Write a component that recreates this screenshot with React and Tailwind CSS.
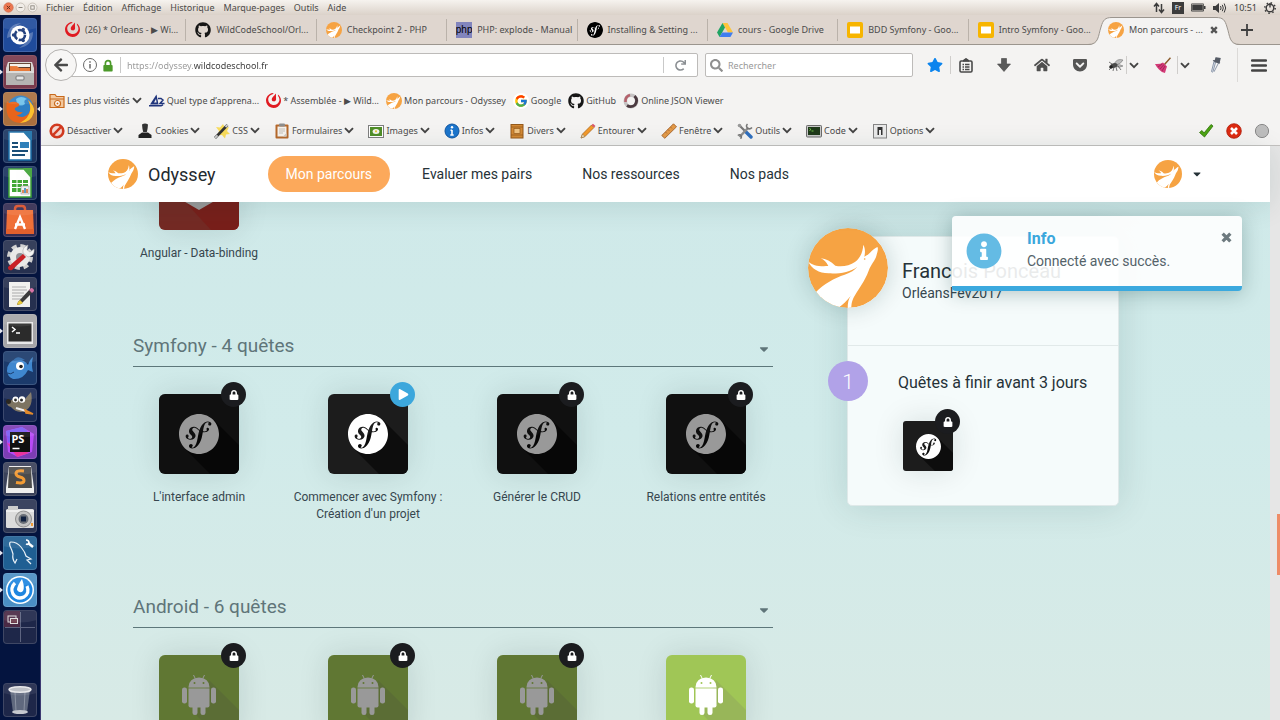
import React from "react";
import {
  FaGithub,
  FaLock,
  FaPlay,
  FaInfoCircle,
  FaCaretDown,
  FaHome,
  FaStar,
  FaSearch,
  FaGetPocket,
  FaRedo,
  FaArrowLeft,
} from "react-icons/fa";
import { SiMattermost, SiSymfony } from "react-icons/si";
import { FcGoogle } from "react-icons/fc";

/* ---------- Shared drawings ---------- */

function Deer({ className }) {
  const id = React.useId();
  return (
    <svg viewBox="0 0 240 240" className={className} aria-hidden="true">
      <clipPath id={id}>
        <circle cx="120" cy="120" r="120" />
      </clipPath>
      <circle cx="120" cy="120" r="120" fill="#f6a343" />
      <g clipPath={`url(#${id})`}>
        <path
          d="M1 101C14 112 32 116 61 114C55 102 49 96 38 91C54 92 69 101 82 113C102 118 124 113 142 101C156 91 164 74 166 50C173 64 171 77 169 86C174 84 180 80 186 74C194 66 201 61 208 57C212 62 208 72 205 84C201 98 190 108 182 128C170 160 151 184 141 202C131 218 130 230 130 242H119C119 226 121 214 128 204C116 219 104 231 90 240C66 236 42 221 24 192C46 168 80 150 110 140C128 134 141 125 148 116C128 132 92 138 62 136C32 135 11 122 1 101Z"
          fill="#fff"
        />
        <path d="M143 106C152 100 160 93 166 90" fill="none" stroke="#fff" strokeWidth="7" />
      </g>
      <circle cx="170" cy="93" r="2.500" fill="#f6a343" />
    </svg>
  );
}

function Chevron() {
  return (
    <svg viewBox="0 0 10 7" className="h-[7px] w-[10px] shrink-0" aria-hidden="true">
      <path d="M1 1.200l4 4 4-4" fill="none" stroke="#444" strokeWidth="1.900" />
    </svg>
  );
}

function Cross({ className }) {
  return (
    <svg viewBox="0 0 10 10" className={className} aria-hidden="true">
      <path d="M1.500 1.500l7 7M8.500 1.500l-7 7" stroke="currentColor" strokeWidth="3" />
    </svg>
  );
}

function Ico({ children, box = "0 0 16 16" }) {
  return (
    <svg viewBox={box} className="h-4 w-4 shrink-0" aria-hidden="true">
      {children}
    </svg>
  );
}

const Slides = () => (
  <Ico>
    <rect width="16" height="16" rx="2" fill="#f7b500" />
    <rect x="3" y="4.500" width="10" height="7" fill="#fff" />
  </Ico>
);
const Drive = () => (
  <Ico>
    <path d="M5.500 1h5L16 10.500h-5z" fill="#fdc53a" />
    <path d="M5.500 1L8 5.400 2.600 15 0 10.500z" fill="#1fa463" />
    <path d="M5.200 10.500H16L13.400 15H2.600z" fill="#3f7df0" />
  </Ico>
);
const Php = () => (
  <span className="flex h-4 w-4 shrink-0 items-center justify-center overflow-hidden bg-[#8285bd] font-['Liberation_Sans',sans-serif] text-[10px] leading-4 text-black">
    php
  </span>
);
const Octo = () => <FaGithub className="h-4 w-4 shrink-0 text-[#161616]" />;
const Matter = () => <SiMattermost className="h-[15px] w-[15px] shrink-0 text-[#e01b22]" />;
const Sf = () => (
  <span className="flex h-4 w-4 shrink-0 items-center justify-center rounded-full bg-white">
    <SiSymfony className="h-4 w-4 text-black" />
  </span>
);

/* ---------- Desktop menu bar ---------- */

const MENUS = ["Fichier", "Édition", "Affichage", "Historique", "Marque-pages", "Outils", "Aide"];

function MenuBar() {
  return (
    <header className="flex h-[15px] shrink-0 items-center bg-linear-to-b from-[#f6f3ef] to-[#dbd2c9] text-[9px] leading-[15px] text-[#4b4a48]">
      <div className="flex gap-px pl-[3px]">
        <button aria-label="Fermer" className="h-[11px] w-[11px]">
          <svg viewBox="0 0 11 11">
            <circle cx="5.500" cy="5.500" r="4.700" fill="#ee7750" stroke="#c9694a" strokeWidth=".7" />
            <path d="M3.800 3.800l3.400 3.400M7.200 3.800L3.800 7.200" stroke="#6b3522" />
          </svg>
        </button>
        <button aria-label="Réduire" className="h-[11px] w-[11px]">
          <svg viewBox="0 0 11 11">
            <circle cx="5.500" cy="5.500" r="4.500" fill="#f1ede8" stroke="#b9b1a8" strokeWidth=".7" />
            <path d="M3.500 5.500h4" stroke="#8f8981" />
          </svg>
        </button>
        <button aria-label="Restaurer" className="h-[11px] w-[11px]">
          <svg viewBox="0 0 11 11">
            <circle cx="5.500" cy="5.500" r="4.500" fill="#f1ede8" stroke="#b9b1a8" strokeWidth=".7" />
            <rect x="3.800" y="3.800" width="3.400" height="3.400" fill="none" stroke="#8f8981" strokeWidth=".9" />
          </svg>
        </button>
      </div>
      <nav className="flex gap-[9px] pl-2">
        {MENUS.map((m) => (
          <button key={m}>{m}</button>
        ))}
      </nav>
      <div className="ml-auto flex items-center gap-[7px] pr-[4px] text-[#3c3c3c]">
        <svg viewBox="0 0 12 12" className="h-3 w-3" aria-hidden="true">
          <path d="M3.500 10V2M1 4.500l2.500-3 2.500 3M8.500 2v8M6 7.500l2.500 3 2.500-3" fill="none" stroke="currentColor" strokeWidth="1.500" />
        </svg>
        <span className="flex h-3 w-3 items-center justify-center bg-[#3c3c3c] text-[7px] text-white">Fr</span>
        <svg viewBox="0 0 15 9" className="h-[9px] w-[15px]" fill="currentColor" aria-hidden="true">
          <path d="M0 1.500A1 1 0 011 .5h11a1 1 0 011 1V3h1.500v3H13v1.500a1 1 0 01-1 1H1a1 1 0 01-1-1z" />
          <rect x="1" y="1.500" width="11" height="6" fill="none" stroke="#d8d2cb" strokeWidth=".5" />
        </svg>
        <svg viewBox="0 0 14 12" className="h-3 w-[14px]" aria-hidden="true">
          <path d="M0 4h2.500L6 1v10L2.500 8H0z" fill="currentColor" />
          <path d="M7.500 4q1.200 2 0 4M9.300 2.800q2 3.200 0 6.400M11.200 1.500q3 4.500 0 9" fill="none" stroke="currentColor" />
        </svg>
        <span className="text-[9px]">10:51</span>
        <svg viewBox="0 0 12 12" className="h-3 w-3" fill="none" stroke="currentColor" aria-hidden="true">
          <circle cx="6" cy="6" r="3.800" strokeWidth="1.400" />
          <circle cx="6" cy="6" r="5.200" strokeDasharray="1.500 2.580" strokeWidth="1.500" />
          <path d="M6 1v4.500" strokeWidth="1.400" />
        </svg>
      </div>
    </header>
  );
}

/* ---------- Launcher ---------- */

const LAUNCHER = [
  {
    name: "Dash",
    bg: "bg-[#1f4b9c]",
    art: (
      <>
        <path d="M4 20Q5 6 18 5Q10 9 10 18zM30 14Q30 28 16 30Q25 25 25 16z" fill="#fff" opacity=".25" />
        <circle cx="17" cy="17" r="9.500" fill="#fff" />
        <circle cx="17" cy="17" r="5" fill="none" stroke="#24427f" strokeWidth="2.600" strokeDasharray="9 1.470" />
        <circle cx="10.500" cy="17" r="1.700" fill="#24427f" />
        <circle cx="20.200" cy="11.400" r="1.700" fill="#24427f" />
        <circle cx="20.200" cy="22.600" r="1.700" fill="#24427f" />
      </>
    ),
  },
  {
    name: "Fichiers",
    bg: "bg-[#793a4c]",
    left: true,
    art: (
      <>
        <path d="M5 7h24l2 6v17H3V13z" fill="#d6d3d0" />
        <path d="M6 8h22v8H6z" fill="#5b3a2a" />
        <path d="M7 9h20v3H7z" fill="#f4efe9" />
        <path d="M7 11h7l2 2h11v4H7z" fill="#e77a3a" />
        <path d="M3 16h28v14H3z" fill="#b5b4b2" />
        <path d="M3 16h28v2H3z" fill="#dcdbd9" />
        <rect x="13" y="21" width="8" height="4" rx="1" fill="#e6e6e6" stroke="#777" />
      </>
    ),
  },
  {
    name: "Firefox",
    bg: "bg-[#a96f3f]",
    left: true,
    right: true,
    art: (
      <>
        <circle cx="17.500" cy="16.500" r="13" fill="#2f7fc4" />
        <path d="M13 7Q18 3 24 7Q20 8 22 12Q18 15 14 12z" fill="#6fc0ea" />
        <path d="M4 9Q5 12 8 10Q12 9 15 11Q18 13 14 15Q11 16 12 18Q15 21 20 20Q17 24 13 23Q20 28 26 21Q29 15 25 8Q32 14 31 20Q28 31 17 31Q4 30 3.500 17Q3 13 4 9z" fill="#e8641b" />
        <path d="M25 8Q32 14 31 20Q28 31 17 31Q26 26 27 19Q28 13 25 8z" fill="#fbc02d" />
      </>
    ),
  },
  {
    name: "Writer",
    bg: "bg-[#1b3560]",
    art: (
      <>
        <path d="M6 3h15l7 8v20H6z" fill="#fff" stroke="#1b6fa8" strokeWidth="1.500" />
        <path d="M20 2h9v10z" fill="#1b6fa8" />
        <path d="M9 14h6M9 18h6M9 22h16M9 26h13" stroke="#1b4f78" strokeWidth="2" />
        <rect x="17" y="13" width="9" height="6" fill="#2f80ba" />
      </>
    ),
  },
  {
    name: "Calc",
    bg: "bg-[#1b3560]",
    art: (
      <>
        <path d="M6 3h15l7 8v20H6z" fill="#fff" stroke="#3fa536" strokeWidth="1.500" />
        <path d="M20 2h9v10z" fill="#3fa536" />
        <path d="M9 14h16v12H9z" fill="#43a836" />
        <path d="M9 17.500h16M9 21.500h16M14 14v12M19.500 14v12" stroke="#fff" />
        <rect x="18" y="20" width="8" height="8" fill="#f2f2f2" stroke="#999" strokeWidth=".6" />
        <path d="M20 27v-3M24 27v-4" stroke="#d76b28" strokeWidth="1.500" />
        <path d="M22 27v-5" stroke="#2f80ba" strokeWidth="1.500" />
      </>
    ),
  },
  {
    name: "Logithèque",
    bg: "bg-[#352c52]",
    art: (
      <>
        <path d="M12 10V6q0-3 3-3h4q3 0 3 3v4" fill="none" stroke="#d9502a" strokeWidth="2.500" />
        <path d="M4 7h26l1 24H3z" fill="#ef7038" />
        <path d="M3 26h28v5H3z" fill="#e2602d" />
        <path d="M12 26l5-12 5 12M12 21.500h10" fill="none" stroke="#fff" strokeWidth="2.400" />
      </>
    ),
  },
  {
    name: "Paramètres",
    bg: "bg-[#26304f]",
    art: (
      <>
        <circle cx="17" cy="17" r="11" fill="none" stroke="#cfcfcf" strokeWidth="4" strokeDasharray="5 3.640" />
        <circle cx="17" cy="17" r="10" fill="#e9e9e9" />
        <circle cx="17" cy="17" r="4" fill="#8f8f96" />
        <path d="M5 27L20 14l3 3L9 30q-4 1-4-3z" fill="#c92127" />
        <path d="M20 13q-1-6 5-8l-1 5 3 2 4-3q1 7-6 8z" fill="#f2f2f2" stroke="#999" strokeWidth=".5" />
      </>
    ),
  },
  {
    name: "Éditeur",
    bg: "bg-[#26304f]",
    art: (
      <>
        <rect x="6" y="5" width="21" height="25" fill="#f0f0ee" />
        <path d="M9 10h14M9 13h15M9 16h12M9 19h14M9 22h9" stroke="#aaa" strokeWidth="1" />
        <path d="M15 25L27 12l3 3-12 12-4 1z" fill="#3b3b3b" />
        <path d="M15 25l2-2 3 3-2 1-4 1z" fill="#e8c93b" />
        <path d="M26 13l2-2q3 0 3 3l-2 2z" fill="#d874a8" />
      </>
    ),
  },
  {
    name: "Terminal",
    bg: "bg-[#a5a5a8]",
    left: true,
    art: (
      <>
        <rect x="4" y="8" width="26" height="22" fill="#e9e9e9" />
        <rect x="5.500" y="9.500" width="23" height="18" fill="#2b2b2b" />
        <path d="M9 13l3 2.500L9 18M13 19h4" fill="none" stroke="#fff" strokeWidth="1.500" />
      </>
    ),
  },
  {
    name: "Bluefish",
    bg: "bg-[#1b3a6b]",
    art: (
      <>
        <path d="M4 20Q4 10 14 8Q22 9 25 14Q27 8 30 6Q28 14 30 21Q27 20 25 19Q20 29 10 28Q4 25 4 20z" fill="#3f87cf" />
        <path d="M10 10Q14 3 22 9z" fill="#2c66a8" />
        <circle cx="17" cy="15" r="4" fill="#fff" />
        <circle cx="18" cy="15.500" r="1.800" fill="#222" />
        <path d="M4 22Q8 24 11 21" stroke="#1d3f70" fill="none" />
      </>
    ),
  },
  {
    name: "GIMP",
    bg: "bg-[#1a2a55]",
    art: (
      <>
        <path d="M4 12Q8 14 11 10Q18 12 22 11L28 4Q31 18 22 23Q14 26 8 19Q3 18 4 12z" fill="#7d7462" />
        <circle cx="5.500" cy="13.500" r="2.500" fill="#2a2722" />
        <circle cx="12.500" cy="11.500" r="3" fill="#fff" />
        <circle cx="19" cy="11.500" r="3.200" fill="#fff" />
        <circle cx="12.500" cy="12" r="1.400" fill="#222" />
        <circle cx="18.500" cy="12" r="1.500" fill="#222" />
        <path d="M13 20l10 3" stroke="#eee" strokeWidth="2" />
        <path d="M22 22l8 4-7-1z" fill="#e18a2c" stroke="#e18a2c" strokeWidth="1.500" />
      </>
    ),
  },
  {
    name: "PhpStorm",
    bg: "bg-[#7c3db4]",
    left: true,
    art: (
      <>
        <path d="M3 6l16-4 12 7-2 18-14 5L5 27z" fill="#b74af7" />
        <path d="M3 6l16-4 6 4-20 12z" fill="#7b5cf5" />
        <path d="M4 18l10 14 12-4z" fill="#e9359d" />
        <rect x="7" y="7" width="20" height="20" fill="#101010" />
        <text x="8.500" y="17.500" fill="#fff" fontSize="11" fontWeight="700" fontFamily="Noto Sans, sans-serif">PS</text>
        <path d="M9.500 23.500h7" stroke="#fff" strokeWidth="1.400" />
      </>
    ),
  },
  {
    name: "Sublime Text",
    bg: "bg-[#3a4159]",
    art: (
      <>
        <path d="M6 4h22l3 22v5H3v-5z" fill="#eee" />
        <path d="M6 5h22l1 21H5z" fill="#4b4b4b" />
        <path d="M21 9Q13 8 13 11.500Q13 14 17 15Q21 16 21 18.500Q21 22 13 20.500" fill="none" stroke="#f29b34" strokeWidth="3" />
      </>
    ),
  },
  {
    name: "Appareil photo",
    bg: "bg-[#2b3553]",
    art: (
      <>
        <rect x="3" y="10" width="28" height="19" rx="1.500" fill="#dcdcdc" />
        <rect x="5" y="7" width="10" height="4" fill="#c8c8c8" />
        <path d="M3 12h28" stroke="#fff" />
        <circle cx="20.500" cy="20" r="8" fill="#c3c3c3" stroke="#8d8d8d" />
        <circle cx="20.500" cy="20" r="5" fill="#6b7078" />
        <rect x="18" y="17.500" width="5" height="5" fill="#10203f" />
        <path d="M28 24h2v3h-2z" fill="#f29b34" />
      </>
    ),
  },
  {
    name: "MySQL Workbench",
    bg: "bg-[#1f5f93]",
    left: true,
    art: (
      <>
        <path d="M14 23L12 27Q9 23 10 18Q9 14 7 10Q6 6 8 6Q14 6 18 11Q22 16 23 20L28 23 24 24 28 28" fill="none" stroke="#e8f0f6" strokeWidth="1.200" />
        <path d="M25 7l5 4" stroke="#fff" strokeWidth="2.400" />
        <path d="M23 4q3 0 3 3-1 2-3 1" fill="none" stroke="#fff" strokeWidth="1.600" />
      </>
    ),
  },
  {
    name: "Mattermost",
    bg: "bg-[#4b8fc4]",
    left: true,
    art: (
      <>
        <circle cx="17" cy="17" r="14" fill="#fff" />
        <circle cx="17" cy="17" r="12.500" fill="#1f86e0" />
        <path d="M12 10Q7 15 10 21Q14 27 21 24Q27 20 24 13" fill="none" stroke="#fff" strokeWidth="3.200" />
        <path d="M19 6Q22 14 20 18Q17 21 14 17Q14 13 19 6z" fill="#fff" />
      </>
    ),
  },
  {
    name: "Espaces de travail",
    bg: "bg-[#1e2749]",
    art: (
      <>
        <path d="M1 1h16v16H1z" fill="#4a2a45" />
        <path d="M17.500 2v30M2 17.500h30" stroke="#5d6480" />
        <rect x="5" y="6" width="8" height="6" fill="none" stroke="#ddd" />
        <rect x="7.500" y="8.500" width="7" height="5" fill="#6b3a4a" stroke="#ddd" />
      </>
    ),
  },
  {
    name: "Corbeille",
    bg: "bg-[#1e2749]",
    push: true,
    art: (
      <>
        <path d="M7 7h20l-3 22q-7 3-14 0z" fill="#717a8c" opacity=".8" />
        <path d="M12 9l1 19M22 9l-1 19" stroke="#aab0bd" opacity=".6" />
        <ellipse cx="17" cy="6.500" rx="11" ry="2.800" fill="#b9bcc3" stroke="#e6e7ea" strokeWidth="1.500" />
        <ellipse cx="17" cy="29" rx="8" ry="2" fill="#c6c9cf" />
      </>
    ),
  },
];

function Launcher() {
  return (
    <aside className="flex w-[41px] shrink-0 flex-col gap-[3px] overflow-hidden border-r border-[#3d3a72] bg-[#04143f] pt-[3px] pb-[3px]">
      {LAUNCHER.map((a) => (
        <div key={a.name} className={`flex shrink-0 items-center ${a.push ? "mt-auto" : ""}`}>
          <svg viewBox="0 0 3 8" className="h-2 w-[3px] shrink-0" aria-hidden="true">
            {a.left && <path d="M0 1.500L3 4 0 6.500z" fill="#e4e6ef" />}
          </svg>
          <button
            aria-label={a.name}
            className={`h-[34px] w-[34px] shrink-0 overflow-hidden rounded-[4px] border border-white/15 ${a.bg}`}
          >
            <svg viewBox="1 1 32 32" className="h-8 w-8" aria-hidden="true">
              {a.art}
              <path d="M0 0h34v10Q17 15 0 10z" fill="#fff" opacity=".08" />
            </svg>
          </button>
          <svg viewBox="0 0 3 8" className="h-2 w-[3px] shrink-0" aria-hidden="true">
            {a.right && <path d="M3 1.500L0 4l3 2.500z" fill="#e4e6ef" />}
          </svg>
        </div>
      ))}
    </aside>
  );
}

/* ---------- Browser chrome ---------- */

const DeerSmall = () => <Deer className="h-4 w-4 shrink-0" />;

const TABS = [
  { icon: <Matter />, text: "(26) * Orleans - ▶ Wi..." },
  { icon: <Octo />, text: "WildCodeSchool/Orl..." },
  { icon: <DeerSmall />, text: "Checkpoint 2 - PHP" },
  { icon: <Php />, text: "PHP: explode - Manual" },
  { icon: <Sf />, text: "Installing & Setting ..." },
  { icon: <Drive />, text: "cours - Google Drive" },
  { icon: <Slides />, text: "BDD Symfony - Goo..." },
  { icon: <Slides />, text: "Intro Symfony - Goo..." },
];

function TabStrip() {
  return (
    <div className="flex h-[30px] shrink-0 items-center border-b border-[#9b958e] bg-[#dfd6cf] pl-[15px]">
      {TABS.map((t, i) => (
        <button
          key={t.text}
          className={`flex h-[22px] min-w-0 flex-1 items-center gap-[5px] pl-[9px] whitespace-nowrap ${
            i < TABS.length - 1 ? "border-r border-[#bab2aa]" : ""
          }`}
        >
          {t.icon}
          <span>{t.text}</span>
        </button>
      ))}
      <div className="relative flex h-[30px] w-[132px] shrink-0 items-center">
        <svg viewBox="0 0 152 30" className="absolute top-px -left-[10px] h-[30px] w-[152px]" aria-hidden="true">
          <path d="M0 29C11 29 10 20 13 11C15 4 17 1.500 24 1.500H128C135 1.500 137 4 139 11C142 20 141 29 152 29V30H0z" fill="#f4f3f2" />
          <path d="M0 28.500C11 28.500 10 20 13 11C15 4 17 1.500 24 1.500H128C135 1.500 137 4 139 11C142 20 141 28.500 152 28.500" fill="none" stroke="#9b958e" />
        </svg>
        <button className="relative flex min-w-0 flex-1 items-center gap-[5px] pl-[10px] whitespace-nowrap">
          <DeerSmall />
          <span>Mon parcours - ...</span>
        </button>
        <button aria-label="Fermer l'onglet" className="relative mr-3 text-[#555]">
          <Cross className="h-2 w-2" />
        </button>
      </div>
      <button aria-label="Nouvel onglet" className="w-[50px] shrink-0 pl-[11px]">
        <svg viewBox="0 0 12 12" className="h-3 w-3" aria-hidden="true">
          <path d="M6 0v12M0 6h12" stroke="#3f3f3f" strokeWidth="1.800" />
        </svg>
      </button>
    </div>
  );
}

function NavToolbar() {
  return (
    <div className="flex h-10 shrink-0 items-center">
      <button
        aria-label="Page précédente"
        className="z-10 ml-[4px] flex h-8 w-8 shrink-0 items-center justify-center rounded-full border border-[#b4b2b0] bg-[#f7f6f5] text-[#4a4a4a]"
      >
        <FaArrowLeft className="h-4 w-4" />
      </button>
      <div className="-ml-4 flex h-6 min-w-0 flex-1 items-center rounded-[2px] border border-[#bdbbb9] bg-white pl-5">
        <svg viewBox="0 0 16 16" className="h-4 w-4 shrink-0" aria-hidden="true">
          <circle cx="8" cy="8" r="6.500" fill="none" stroke="#6a6a6a" />
          <path d="M8 7v4.500M8 4.200v1.600" stroke="#6a6a6a" strokeWidth="1.500" />
        </svg>
        <svg viewBox="0 0 12 14" className="ml-[4px] h-[13px] w-3 shrink-0" aria-hidden="true">
          <path d="M3.200 7V4.500a2.800 2.800 0 015.600 0V7" fill="none" stroke="#4c9a2a" strokeWidth="1.800" />
          <rect x="1" y="6.500" width="10" height="7" rx=".8" fill="#4c9a2a" />
        </svg>
        <span className="ml-[6px] h-4 w-px shrink-0 bg-[#c9c9c9]" />
        <input
          aria-label="Adresse"
          defaultValue="https://odyssey.wildcodeschool.fr"
          className="ml-[6px] h-5 min-w-0 flex-1 bg-linear-to-r from-[#979797] from-[67px] to-[#3a3a3a] to-[67px] bg-clip-text text-[9px] text-transparent outline-none"
        />
        <span className="h-4 w-px shrink-0 bg-[#c9c9c9]" />
        <button aria-label="Actualiser" className="flex w-[33px] shrink-0 justify-center text-[#8b8f93]">
          <FaRedo className="h-[11px] w-[11px]" />
        </button>
      </div>
      <div className="ml-[7px] flex h-6 w-[208px] shrink-0 items-center gap-[5px] rounded-[2px] border border-[#bdbbb9] bg-white pl-[4px]">
        <FaSearch className="h-[13px] w-[13px] text-[#8f8f8f]" />
        <input
          aria-label="Rechercher"
          placeholder="Rechercher"
          className="h-5 min-w-0 flex-1 text-[9px] outline-none placeholder:text-[#999]"
        />
      </div>
      <button aria-label="Marquer cette page" className="flex h-[18px] w-[38px] shrink-0 items-center justify-center border-r border-[#cfcdcb] pl-1.5 text-[#0b84ee]">
        <FaStar className="h-4 w-4" />
      </button>
      <button aria-label="Marque-pages" className="flex w-[34px] shrink-0 justify-center pr-1">
        <svg viewBox="0 0 14 15" className="h-[15px] w-[14px]" aria-hidden="true">
          <rect x="1" y="3" width="12" height="11" rx="1.200" fill="none" stroke="#4a4a4a" strokeWidth="1.600" />
          <path d="M4.500 3.500V2L7 .5 9.500 2v1.500" fill="#4a4a4a" stroke="#4a4a4a" />
          <path d="M3.500 6.500h7M3.500 9h7M3.500 11.500h7" stroke="#4a4a4a" strokeWidth="1.300" strokeDasharray="1.500 1 9" />
        </svg>
      </button>
      <button aria-label="Téléchargements" className="flex w-[38px] shrink-0 justify-center">
        <svg viewBox="0 0 14 14" className="h-[14px] w-[14px]" aria-hidden="true">
          <path d="M4.500 .5h5V6h4L7 13.500.5 6h4z" fill="#5a5a5a" stroke="#444" strokeWidth=".6" />
        </svg>
      </button>
      <button aria-label="Accueil" className="flex w-[38px] shrink-0 justify-center text-[#4f4f4f]">
        <FaHome className="h-4 w-4" />
      </button>
      <button aria-label="Pocket" className="flex w-[38px] shrink-0 justify-center text-[#555]">
        <FaGetPocket className="h-4 w-4" />
      </button>
      <button aria-label="Firebug" className="flex h-[18px] w-[28px] shrink-0 items-center justify-center border-r border-[#cfcdcb] pl-1.5">
        <Ico>
          <path d="M6 7Q9 1 15 3Q13 7 8 8zM8 8Q12 7 15 9Q12 11 8 9.500z" fill="#bdbdbd" stroke="#777" strokeWidth=".6" />
          <ellipse cx="6" cy="8.500" rx="3.600" ry="2.300" fill="#4b4b4b" transform="rotate(-15 6 8.500)" />
          <circle cx="3" cy="10" r="1.800" fill="#222" />
          <path d="M4 7L1 5M6 10l-1 4M8 10l1 4M10 9l3 4M3 11l-2 2" stroke="#555" strokeWidth=".8" />
        </Ico>
      </button>
      <button aria-label="Menu Firebug" className="flex w-[14px] shrink-0 justify-center">
        <Chevron />
      </button>
      <button aria-label="Nettoyer" className="flex h-[18px] w-[37px] shrink-0 items-center justify-center border-r border-[#cfcdcb] pl-2">
        <Ico>
          <path d="M15.500 .8L9.500 7.500" stroke="#8a5a2b" strokeWidth="1.500" />
          <path d="M8 5.500l4 4Q11 12 10 16Q6 15 4 12.500Q1.500 10 0 7Q5 7.500 8 5.500z" fill="#d33a77" />
          <path d="M9 7.500L5 12M10 9l-3 5M7 7L3 10" stroke="#8f1e4c" strokeWidth=".7" />
        </Ico>
      </button>
      <button aria-label="Menu Nettoyer" className="flex w-[14px] shrink-0 justify-center">
        <Chevron />
      </button>
      <button aria-label="Pipette" className="flex h-[34px] w-[46px] shrink-0 items-center justify-center border-r border-[#dcdad8] pl-[3px]">
        <Ico>
          <path d="M7.500 5.500L5 14.500q-1 1.500-1.500 0L6 4.500z M10.500 6L6 14.800" fill="#dfe6f0" stroke="#8c97aa" strokeWidth="1" />
          <path d="M5 3.500l7 2.500M8 1l4 .5L11 6 7 4.500z" fill="#555b66" stroke="#555b66" strokeWidth="1.300" />
        </Ico>
      </button>
      <button aria-label="Ouvrir le menu" className="flex w-[42px] shrink-0 justify-center">
        <svg viewBox="0 0 16 13" className="h-[13px] w-4" aria-hidden="true">
          <path d="M1 1.500h14M1 6.500h14M1 11.500h14" stroke="#444" strokeWidth="2.400" strokeLinecap="round" />
        </svg>
      </button>
    </div>
  );
}

const BOOKMARKS = [
  {
    text: "Les plus visités",
    menu: true,
    icon: (
      <Ico>
        <path d="M1 14.500V1.500h5l1.500 2H15v11z" fill="#f3c99f" stroke="#c8691c" strokeWidth="1.200" />
        <path d="M1 6h14" stroke="#c8691c" />
        <circle cx="8.500" cy="10.500" r="3" fill="#fff" stroke="#c8691c" strokeWidth="1.200" />
        <circle cx="8.500" cy="10.500" r="1" fill="#c8691c" />
      </Ico>
    ),
  },
  {
    text: "Quel type d’apprena...",
    icon: (
      <Ico>
        <path d="M1 11.500L7.500 1.500l2 10z" fill="#20357c" />
        <path d="M5 9.500L7 6l.6 3.500z" fill="#f4f3f2" />
        <path d="M9 5.500h3l2 1.500-3 3.500h4.500M0 12.800h12l2-1" fill="none" stroke="#20357c" strokeWidth="1.500" />
      </Ico>
    ),
  },
  { text: "* Assemblée - ▶ Wild...", icon: <Matter /> },
  { text: "Mon parcours - Odyssey", icon: <DeerSmall /> },
  {
    text: "Google",
    icon: (
      <span className="flex h-4 w-4 shrink-0 items-center justify-center rounded-full bg-white">
        <FcGoogle className="h-[14px] w-[14px]" />
      </span>
    ),
  },
  { text: "GitHub", icon: <Octo /> },
  {
    text: "Online JSON Viewer",
    icon: (
      <Ico>
        <circle cx="8" cy="8" r="5.700" fill="none" stroke="#c6c3c4" strokeWidth="3.600" />
        <path d="M11.500 3Q15.500 7 12 12Q8 15 4 12.500" fill="none" stroke="#4b3a40" strokeWidth="2.800" />
        <path d="M7 2Q2 3.500 2.500 9" fill="none" stroke="#b5626c" strokeWidth="2.600" />
      </Ico>
    ),
  },
];

const DEV = [
  {
    text: "Désactiver",
    icon: (
      <Ico>
        <circle cx="8" cy="8" r="6.300" fill="#f4d9d3" stroke="#d23a20" strokeWidth="2.600" />
        <path d="M12.300 3.700L3.700 12.300" stroke="#d23a20" strokeWidth="2.400" />
      </Ico>
    ),
  },
  {
    text: "Cookies",
    icon: (
      <Ico>
        <path d="M5 1.500Q8-.5 11 1.500L10.500 6 9.800 9H6.200L5.500 6z" fill="#333" />
        <path d="M1.500 15v-3L5 9.500h6l3.500 2.500v3z" fill="#222" />
      </Ico>
    ),
  },
  {
    text: "CSS",
    icon: (
      <Ico>
        <path d="M9 1l2 4 4-1-2 4 3 3-4 .5-1 4L8 12l-5 .5L5 8 2 4l4 .5z" fill="#f8dc5c" />
        <path d="M1 15L13.500 2" stroke="#333" strokeWidth="2.600" />
        <path d="M1 15l2.500-2.600M11.500 4l2-2" stroke="#ccc" strokeWidth="2" />
      </Ico>
    ),
  },
  {
    text: "Formulaires",
    icon: (
      <Ico>
        <rect x="1.500" y="1.500" width="13" height="14" rx="1" fill="#b5692b" />
        <rect x="3.500" y="3.500" width="9" height="10" fill="#f5f2ee" />
        <rect x="5" y=".5" width="6" height="3" rx="1" fill="#8d8d8d" />
        <path d="M5 6h6M5 8h6M5 10h4" stroke="#c5c0b8" />
        <path d="M9 13.500l3.500-3.500v3.500z" fill="#cfc8be" />
      </Ico>
    ),
  },
  {
    text: "Images",
    icon: (
      <Ico>
        <rect x=".5" y="2.500" width="15" height="12" fill="#fff" stroke="#7f7f7f" />
        <rect x="2" y="4" width="12" height="9" fill="#4f8e28" />
        <ellipse cx="8" cy="8.500" rx="3.400" ry="2.500" fill="#f4f4ee" />
        <circle cx="8" cy="8.300" r="1.100" fill="#e2c82e" />
      </Ico>
    ),
  },
  {
    text: "Infos",
    icon: (
      <Ico>
        <circle cx="8" cy="8" r="7" fill="#1c75cc" stroke="#0f55a0" />
        <path d="M8 7v5M6.500 7.300H8M6.300 12h3.400" stroke="#fff" strokeWidth="1.600" />
        <circle cx="8" cy="4.200" r="1.200" fill="#fff" />
      </Ico>
    ),
  },
  {
    text: "Divers",
    icon: (
      <Ico>
        <rect x="2" y="1.500" width="12" height="13.500" fill="#d48a35" stroke="#94591a" />
        <path d="M2 4h12M2 12h12" stroke="#94591a" strokeWidth=".8" />
        <rect x="5" y="5.500" width="6" height="5" fill="#f0c382" stroke="#94591a" strokeWidth=".7" />
      </Ico>
    ),
  },
  {
    text: "Entourer",
    icon: (
      <Ico>
        <path d="M1 15l1.500-4L11.500 2 14 4.500 5 13.500z" fill="#f39a2b" stroke="#a5611a" strokeWidth=".7" />
        <path d="M1 15l1.500-4L5 13.500z" fill="#f3dcb7" stroke="#8a6a3d" strokeWidth=".5" />
        <path d="M11.500 2L13 .7 15.500 3 14 4.500z" fill="#d9566a" />
      </Ico>
    ),
  },
  {
    text: "Fenêtre",
    icon: (
      <Ico>
        <path d="M.8 12.500L12.500 .8l3 3L3.800 15.300z" fill="#e39a48" stroke="#a4622a" strokeWidth=".9" />
        <path d="M4.500 9l1.500 1.500M7 6.500L8.500 8M9.500 4L11 5.500" stroke="#a4622a" strokeWidth=".8" />
      </Ico>
    ),
  },
  {
    text: "Outils",
    icon: (
      <Ico>
        <path d="M2 2L9 9" stroke="#777" strokeWidth="2.200" />
        <path d="M8.500 8.500l5.500 5.500" stroke="#2f6fbe" strokeWidth="3.400" strokeLinecap="round" />
        <path d="M2.500 14L11.500 4.500" stroke="#8e8e8e" strokeWidth="2.400" />
        <path d="M10.500 1q-2 2 0 4.300 2.500 1.500 4.500-.8M.8 12.500q2-1.500 3.200.2 1 1.500-.5 3" fill="none" stroke="#777" strokeWidth="1.500" />
        <circle cx="2.500" cy="2.500" r="1.800" fill="#999" />
      </Ico>
    ),
  },
  {
    text: "Code",
    icon: (
      <Ico>
        <rect x=".5" y="2.500" width="15" height="11.500" rx=".8" fill="#c9c9c9" stroke="#6c6c6c" />
        <rect x="2" y="4" width="12" height="8" fill="#1f3a1a" />
        <path d="M3.500 5.500L5 6.500 3.500 7.500M5.500 8h2" fill="none" stroke="#7bd24e" strokeWidth=".9" />
      </Ico>
    ),
  },
  {
    text: "Options",
    icon: (
      <Ico>
        <rect x="1.500" y="1.500" width="13" height="13.500" fill="#e9e9e9" stroke="#858585" />
        <path d="M5.500 4h5v8h-5z" fill="#333" />
        <path d="M7 7h2v5H7z" fill="#eee" />
      </Ico>
    ),
  },
];

function Browser() {
  return (
    <div className="flex shrink-0 flex-col border-b border-[#c3c1bf] bg-[#f4f3f2] text-[9px] text-[#4b4b4b]">
      <TabStrip />
      <NavToolbar />
      <nav className="flex h-[31px] items-center gap-[7px] pl-2 whitespace-nowrap">
        {BOOKMARKS.map((b) => (
          <button key={b.text} className="flex items-center gap-[2px]">
            {b.icon}
            <span>{b.text}</span>
            {b.menu && <Chevron />}
          </button>
        ))}
      </nav>
      <div className="flex h-[29px] items-center justify-between pr-[10px] pl-2 whitespace-nowrap">
        <div className="flex items-center gap-[14px]">
          {DEV.map((b) => (
            <button key={b.text} className="flex items-center gap-[2px]">
              {b.icon}
              <span>{b.text}</span>
              <Chevron />
            </button>
          ))}
        </div>
        <div className="flex gap-3">
          <Ico>
            <path d="M1.500 9.500l2.500-2 2 2.500L13 1.500l2 1.500L6.500 14z" fill="#4da513" stroke="#2d7407" strokeWidth=".8" />
          </Ico>
          <Ico>
            <circle cx="8" cy="8" r="7.300" fill="#dd2b12" stroke="#b01805" strokeWidth=".8" />
            <path d="M5 5l6 6M11 5l-6 6" stroke="#fff" strokeWidth="2.600" />
          </Ico>
          <Ico>
            <circle cx="8" cy="8" r="6.600" fill="#bdbdbd" stroke="#8a8a8a" />
          </Ico>
        </div>
      </div>
    </div>
  );
}

/* ---------- Odyssey page ---------- */

const LINKS = ["Mon parcours", "Evaluer mes pairs", "Nos ressources", "Nos pads"];

function SiteNav() {
  return (
    <header className="relative z-10 flex h-14 shrink-0 items-center bg-white pr-[67px] pl-[67px] text-[#263238] shadow-[0_4px_28px_rgba(0,60,60,0.12)]">
      <a href="#accueil" className="flex items-center gap-[10px] text-[18px] text-[#1f2a30]">
        <Deer className="h-[30px] w-[30px]" />
        Odyssey
      </a>
      <nav className="ml-[52px] flex gap-[14px] text-[14px]">
        {LINKS.map((l, i) => (
          <a
            key={l}
            href="#page"
            className={`flex h-9 items-center rounded-full px-[18px] ${i === 0 ? "bg-[#fca95b] text-white" : ""}`}
          >
            {l}
          </a>
        ))}
      </nav>
      <button aria-label="Compte" className="ml-auto flex items-center gap-[9px]">
        <Deer className="h-7 w-7" />
        <FaCaretDown className="h-3 w-3" />
      </button>
    </header>
  );
}

const TILE = {
  symfony: { base: "bg-[#1c1c1c]", shade: "#0d0d0d" },
  angular: { base: "bg-[#c1463c]", shade: "#c8352c" },
  android: { base: "bg-[#a0c656]", shade: "#98b659" },
};

function Robot() {
  return (
    <g fill="#fff">
      <path d="M29.500 32Q30 23 40 22.500Q50 23 50.500 32z" />
      <path d="M34.500 20l1.500 3M45.500 20l-1.500 3" stroke="#fff" strokeWidth="1" />
      <path d="M29.500 32h21v2h-21z" opacity=".6" />
      <path d="M29.500 34h21v16.500q0 2-2 2h-17q-2 0-2-2z" />
      <rect x="23" y="32.500" width="5" height="16" rx="2.300" />
      <rect x="52" y="32.500" width="5" height="16" rx="2.300" />
      <rect x="33.500" y="46" width="5" height="14" rx="2.300" />
      <rect x="41.500" y="46" width="5" height="14" rx="2.300" />
      <circle cx="35.500" cy="28" r="1" fill="#a0c656" />
      <circle cx="44.500" cy="28" r="1" fill="#a0c656" />
    </g>
  );
}

function Tile({ kind, size = "h-20 w-20", glyph = "h-10 w-10", status, dim, label }) {
  return (
    <div className="relative">
      <div
        className={`relative flex items-center justify-center overflow-hidden shadow-[0_0_30px_rgba(0,40,40,0.13)] ${size} ${
          size === "h-20 w-20" ? "rounded-[6px]" : "rounded-[3px]"
        } ${TILE[kind].base}`}
        role="img"
        aria-label={label}
      >
        <svg viewBox="0 0 80 80" className="absolute inset-0 h-full w-full" aria-hidden="true">
          {kind === "angular" && <path d="M28 54L52 80H80V40L52 12z" fill={TILE[kind].shade} />}
          {kind === "android" && <path d="M36 59L57 80H80V55L50 25z" fill={TILE[kind].shade} />}
          {kind === "symfony" && <path d="M26 55L51 80H80V51L55 26z" fill={TILE[kind].shade} />}
          {kind === "angular" && <path d="M40 12L62 20 59 49 40 60 21 49 18 20z" fill="#fff" />}
          {kind === "android" && <Robot />}
        </svg>
        {kind === "symfony" && <SiSymfony className={`relative text-white ${glyph}`} />}
        {dim && <div className="absolute inset-0 bg-black/40" />}
      </div>
      {status && (
        <span
          className={`absolute -top-3 -right-[7px] flex h-[25px] w-[25px] items-center justify-center rounded-full text-white ${
            status === "play" ? "bg-[#3ca7dc]" : "bg-[#1b1c1f]"
          }`}
        >
          {status === "play" ? <FaPlay className="ml-0.5 h-[11px] w-[11px]" /> : <FaLock className="h-[10px] w-[10px]" />}
        </span>
      )}
    </div>
  );
}

function Quest({ kind, text, status, dim = true }) {
  return (
    <a href="#quete" className="flex flex-col items-center text-center text-[12px] leading-[17px] text-[#37474f]">
      <Tile kind={kind} status={status} dim={dim} label={kind} />
      {text && <span className="mt-[15px] whitespace-pre-line">{text}</span>}
    </a>
  );
}

function Section({ title, quests }) {
  return (
    <section className="mt-[72px]">
      <h2 className="mr-[17px] ml-[18px]">
        <button className="flex w-full items-center justify-between border-b border-[#5d777a] pr-[2px] pb-2 text-[19px] leading-6 text-[#5f7579]">
          {title}
          <FaCaretDown className="mt-1.5 h-[14px] w-[14px]" />
        </button>
      </h2>
      <div className="mt-[27px] grid grid-cols-4 gap-px">
        {quests.map((q, i) => (
          <Quest key={i} {...q} />
        ))}
      </div>
    </section>
  );
}

const SYMFONY = [
  { kind: "symfony", text: "L'interface admin", status: "lock" },
  { kind: "symfony", text: "Commencer avec Symfony :\nCréation d'un projet", status: "play", dim: false },
  { kind: "symfony", text: "Générer le CRUD", status: "lock" },
  { kind: "symfony", text: "Relations entre entités", status: "lock" },
];

const ANDROID = [
  { kind: "android", status: "lock" },
  { kind: "android", status: "lock" },
  { kind: "android", status: "lock" },
  { kind: "android", dim: false },
];

function Profile() {
  return (
    <aside className="mt-[34px] ml-[57px] w-[272px] shrink-0 self-start rounded-[5px] border border-[#dfe9e9] bg-[#f5fbfb] pb-[34px] text-[#263238] shadow-[0_0_36px_rgba(0,60,60,0.14)]">
      <div className="flex h-[109px] border-b border-[#e1e9e9]">
        <Deer className="-mt-[9px] -ml-[40px] h-20 w-20 shrink-0 rounded-full shadow-[0_0_24px_rgba(0,50,50,0.2)]" />
        <div className="mt-[22px] ml-[14px] whitespace-nowrap">
          <p className="text-[20px] leading-6">Francois Ponceau</p>
          <p className="text-[14px] leading-5 text-[#37474f]">OrléansFev2017</p>
        </div>
      </div>
      <div className="-ml-5 flex items-center gap-[30px] pt-[15px]">
        <span className="flex h-10 w-10 items-center justify-center rounded-full bg-[#b1a2e8] pt-1 text-[21px] font-light text-white">1</span>
        <h3 className="pt-1 text-[16px] whitespace-nowrap">Quêtes à finir avant 3 jours</h3>
      </div>
      <div className="mt-5 ml-[55px] w-[50px]">
        <Tile kind="symfony" size="h-[50px] w-[50px]" glyph="h-[25px] w-[25px]" status="lock" label="symfony" />
      </div>
    </aside>
  );
}

function Toast() {
  return (
    <div
      role="status"
      className="absolute top-[70px] right-[28px] z-20 flex h-[75px] w-[290px] rounded-[4px] border-b-[5px] border-[#3ba9de] bg-white/90 pr-[10px] pl-[14px] text-[#37474f] shadow-[0_2px_20px_rgba(0,50,50,0.28)]"
    >
      <FaInfoCircle className="mt-[17px] h-9 w-9 shrink-0 text-[#64bbe4]" />
      <div className="mt-3 ml-[25px] flex-1">
        <p className="text-[16px] leading-[22px] font-bold text-[#3ba7dc]">Info</p>
        <p className="text-[14px] leading-[22px] text-[#54636a]">Connecté avec succès.</p>
      </div>
      <button aria-label="Fermer" className="mt-4 h-[11px] text-[#6d7a7f]">
        <Cross className="h-[11px] w-[11px]" />
      </button>
    </div>
  );
}

export default function App() {
  return (
    <div className="flex h-screen flex-col overflow-hidden font-['Noto_Sans','Open_Sans',sans-serif]">
      <MenuBar />
      <div className="flex min-h-0 flex-1">
        <Launcher />
        <div className="flex min-w-0 flex-1 flex-col">
          <Browser />
          <div className="flex min-h-0 flex-1 font-['Roboto',sans-serif]">
            <div className="relative flex min-w-0 flex-1 flex-col bg-linear-to-b from-[#cfe9e9] via-[#d1ebea] to-[#d8eae6]">
              <SiteNav />
              <main className="flex min-h-0 flex-1 items-start overflow-hidden pl-[74px]">
                <div className="-mt-[52px] w-[675px] shrink-0">
                  <div className="grid grid-cols-4 gap-px">
                    <Quest kind="angular" text="Angular - Data-binding" />
                  </div>
                  <Section title="Symfony - 4 quêtes" quests={SYMFONY} />
                  <Section title="Android - 6 quêtes" quests={ANDROID} />
                </div>
                <Profile />
              </main>
              <Toast />
            </div>
            <div className="flex w-[10px] shrink-0 flex-col items-end bg-[#e6e6e6] pt-[368px]">
              <div className="h-[61px] w-[3px] bg-[#ef8b67]" />
            </div>
          </div>
        </div>
      </div>
    </div>
  );
}
